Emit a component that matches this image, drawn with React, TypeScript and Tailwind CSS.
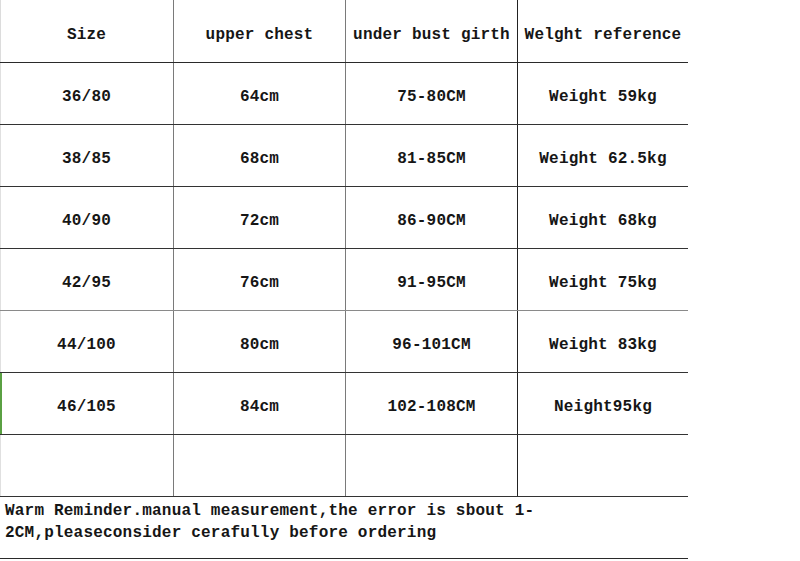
import React from "react";

const header = ["Size", "upper chest", "under bust girth", "Welght reference"];
const rows = [
  ["36/80", "64cm", "75-80CM", "Weight 59kg"],
  ["38/85", "68cm", "81-85CM", "Weight 62.5kg"],
  ["40/90", "72cm", "86-90CM", "Weight 68kg"],
  ["42/95", "76cm", "91-95CM", "Weight 75kg"],
  ["44/100", "80cm", "96-101CM", "Weight 83kg"],
  ["46/105", "84cm", "102-108CM", "Neight95kg"],
  ["", "", "", ""],
];

const colBorders = ["border-r border-[#7a7a7a]", "border-r border-[#7a7a7a]", "border-r border-[#222]", ""];

export default function App() {
  return (
    <div className="w-[800px] h-[561px] bg-white overflow-hidden text-[#161616] font-['Liberation_Mono',monospace] font-bold text-[16px] tracking-[0.2px]">
      <div className="w-[688px]">
        <div className="grid grid-cols-[174px_172px_172px_170px] h-[63px] border-b border-[#2a2a2a] shadow-[inset_1px_0_0_#dcdcdc]">
          {header.map((h, i) => (
            <div key={i} className={`flex items-center justify-center whitespace-nowrap pt-[7px] ${colBorders[i]}`}>
              {h}
            </div>
          ))}
        </div>
        {rows.map((r, ri) => (
          <div
            key={ri}
            className={`grid grid-cols-[174px_172px_172px_170px] h-[62px] border-b ${
              ri === 3 ? "border-[#8a8a8a]" : "border-[#333]"
            } ${ri === 5 ? "shadow-[inset_2px_0_0_#5aa043]" : "shadow-[inset_1px_0_0_#e0e0e0]"}`}
          >
            {r.map((c, ci) => (
              <div key={ci} className={`flex items-center justify-center whitespace-nowrap pt-[7px] ${colBorders[ci]}`}>
                {c}
              </div>
            ))}
          </div>
        ))}
        <div className="h-[62px] border-b border-[#2a2a2a] pl-[5px] pt-[3px] leading-[22px]">
          Warm Reminder.manual measurement,the error is sbout 1-
          <br />
          2CM,pleaseconsider cerafully before ordering
        </div>
      </div>
    </div>
  );
}
